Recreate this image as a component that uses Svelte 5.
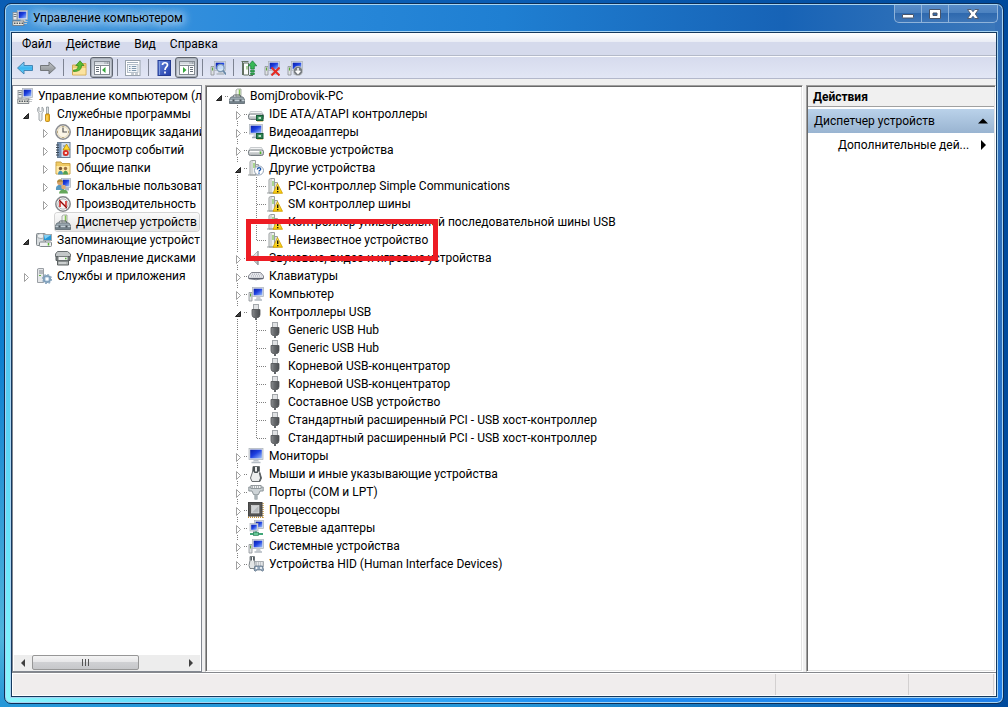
<script>
  const consoleTree = [
    { level: 0, icon: 'console', text: 'Управление компьютером (л' },
    { level: 1, icon: 'tools', text: 'Служебные программы', state: 'open' },
    { level: 2, icon: 'clock', text: 'Планировщик заданий', state: 'closed' },
    { level: 2, icon: 'log', text: 'Просмотр событий', state: 'closed' },
    { level: 2, icon: 'shared', text: 'Общие папки', state: 'closed' },
    { level: 2, icon: 'users', text: 'Локальные пользовате', state: 'closed' },
    { level: 2, icon: 'perf', text: 'Производительность', state: 'closed' },
    { level: 2, icon: 'devmgr', text: 'Диспетчер устройств', selected: true },
    { level: 1, icon: 'storage', text: 'Запоминающие устройст', state: 'open' },
    { level: 2, icon: 'diskmgr', text: 'Управление дисками' },
    { level: 1, icon: 'services', text: 'Службы и приложения', state: 'closed' }
  ];

  const deviceTree = [
    { level: 0, icon: 'devmgr', text: 'BomjDrobovik-PC', state: 'open' },
    { level: 1, icon: 'ide', text: 'IDE ATA/ATAPI контроллеры', state: 'closed' },
    { level: 1, icon: 'video', text: 'Видеоадаптеры', state: 'closed' },
    { level: 1, icon: 'disk', text: 'Дисковые устройства', state: 'closed' },
    { level: 1, icon: 'other', text: 'Другие устройства', state: 'open' },
    { level: 2, icon: 'warn', text: 'PCI-контроллер Simple Communications' },
    { level: 2, icon: 'warn', text: 'SM контроллер шины' },
    { level: 2, icon: 'warn', text: 'Контроллер универсальной последовательной шины USB' },
    { level: 2, icon: 'warn', text: 'Неизвестное устройство', last: true, marked: true },
    { level: 1, icon: 'sound', text: 'Звуковые, видео и игровые устройства', state: 'closed' },
    { level: 1, icon: 'keyboard', text: 'Клавиатуры', state: 'closed' },
    { level: 1, icon: 'computer', text: 'Компьютер', state: 'closed' },
    { level: 1, icon: 'usb', text: 'Контроллеры USB', state: 'open' },
    { level: 2, icon: 'usb', text: 'Generic USB Hub' },
    { level: 2, icon: 'usb', text: 'Generic USB Hub' },
    { level: 2, icon: 'usb', text: 'Корневой USB-концентратор' },
    { level: 2, icon: 'usb', text: 'Корневой USB-концентратор' },
    { level: 2, icon: 'usb', text: 'Составное USB устройство' },
    { level: 2, icon: 'usb', text: 'Стандартный расширенный PCI - USB хост-контроллер' },
    { level: 2, icon: 'usb', text: 'Стандартный расширенный PCI - USB хост-контроллер', last: true },
    { level: 1, icon: 'monitor', text: 'Мониторы', state: 'closed' },
    { level: 1, icon: 'mouse', text: 'Мыши и иные указывающие устройства', state: 'closed' },
    { level: 1, icon: 'port', text: 'Порты (COM и LPT)', state: 'closed' },
    { level: 1, icon: 'cpu', text: 'Процессоры', state: 'closed' },
    { level: 1, icon: 'network', text: 'Сетевые адаптеры', state: 'closed' },
    { level: 1, icon: 'computer', text: 'Системные устройства', state: 'closed' },
    { level: 1, icon: 'hid', text: 'Устройства HID (Human Interface Devices)', state: 'closed', last: true }
  ];

  const tools = [
    { icon: 'back', label: 'Назад' },
    { icon: 'forward', label: 'Вперед' },
    null,
    { icon: 'up', label: 'Вверх' },
    { icon: 'paneLeft', label: 'Дерево консоли', pressed: true },
    null,
    { icon: 'props', label: 'Свойства' },
    null,
    { icon: 'help', label: 'Справка' },
    { icon: 'paneRight', label: 'Панель действий', pressed: true },
    null,
    { icon: 'scan', label: 'Обновить конфигурацию оборудования' },
    null,
    { icon: 'update', label: 'Обновить драйверы' },
    { icon: 'remove', label: 'Удалить' },
    { icon: 'disable', label: 'Отключить' }
  ];

  const screen = (x, y, w, h) =>
    `<rect x="${x}" y="${y}" width="${w}" height="${h}" fill="#dfe3e8" stroke="#a9b0b8" stroke-width=".7"/><rect x="${x + 1.2}" y="${y + 1.2}" width="${w - 2.4}" height="${h - 2.4}" fill="url(#g-screen)"/>`;
  const chassis = '<path d="M2 15V1.500l1.500-1h4V15z" fill="#eef0ef" stroke="#9a9fa0"/><path d="M4 1v14" stroke="#b9bdbe"/><path d="M6 3v5" stroke="#7cc44e" stroke-width="1.200"/><path d="M8 4.500h2.500V15H0" fill="none" stroke="#9a9fa0"/><path d="M8 5h2v9.500H8z" fill="#dcdfdf"/>';
  const chip = '<rect x="8.500" y="9.500" width="6.500" height="5" fill="#2f8652" stroke="#175a35"/><path d="M10 15v1m2-1v1m2-1v1" stroke="#c9a83a"/><rect x="10.500" y="11" width="2.500" height="2" fill="#bfe2c8"/>';
  const drive = '<path d="M2.500 5.500h11l2 3.500H.5z" fill="#f2f3f4" stroke="#b3b8bb" stroke-width=".7"/><rect x=".5" y="8" width="15" height="5.500" rx="2" fill="url(#g-metal)" stroke="#777e83"/><path d="M2 9.500h9" stroke="#fff"/><path d="M12.500 9.500v2.500" stroke="#4fb52a" stroke-width="1.500"/>';
  const tower = '<path d="M1 6.500h3V15H1z" fill="#dfe2e4" stroke="#8a9094" stroke-width=".8"/><path d="M2.500 7.500v3" stroke="#58a838"/>';
  const pc = tower + screen(4.5, 1.5, 11, 9) + '<path d="M8.500 10.500h3.500l1 3H8z" fill="#c7ccd2"/><path d="M6.500 14h7.500" stroke="#b1b8c0" stroke-width="1.500"/>';
  const wcase = '<path d="M2 9h12l1.500 2.500v4H.5v-4z" fill="url(#g-case)" stroke="#59646c" stroke-width=".8"/><path d="M.5 12.500h15" stroke="#d3dde3" stroke-width=".8"/><rect x="3.500" y="11.500" width="2" height="2" fill="#4b555c"/><rect x="10.500" y="11.500" width="2" height="2" fill="#4b555c"/>';
  const paneFrame = '<rect x=".5" y="1.500" width="15" height="13" fill="#fff" stroke="#838a92"/><rect x="1" y="2" width="14" height="2.500" fill="#d5dae0"/><path d="M10.500 3h1m1 0h2" stroke="#69717b"/><path d="M1 5.500h14" stroke="#838a92"/>';

  const icons = {
    console: screen(5.5, 0.5, 10, 9) + '<rect x="1" y="2.500" width="4" height="7.500" fill="#e6e8e8" stroke="#858c93" stroke-width=".8"/><path d="M1.500 4.500h3M1.500 6.500h3" stroke="#777f88"/><path d="M9 9.500h4l1 2H8z" fill="#d3d7db"/><path d="M11 11.500h4.500M12 13.500h3" stroke="#c3c6c8"/><rect x=".8" y="11" width="11" height="4.500" fill="#e5e5df" stroke="#6e747a" stroke-width=".8"/><path d="M2 13.300h9" stroke="#555c62" stroke-width="1.500" stroke-dasharray="1.500 1"/>',
    tools: '<path d="M3 1v3.500L4.500 6 6 4.500V1C8 2.200 8 5.500 6 7v7q-1.500 2-3 0V7C1 5.500 1 2.200 3 1z" fill="#eef0f1" stroke="#8b9297" stroke-width=".8"/><path d="M10.500 1h2v7h-2z" fill="#dde1e3" stroke="#81898f" stroke-width=".7"/><rect x="9.500" y="8" width="4" height="7.500" rx="1" fill="#f2b41c" stroke="#b37c07" stroke-width=".8"/><path d="M11 9.500v5" stroke="#ffe488"/>',
    clock: '<circle cx="8" cy="8" r="7.200" fill="#fbf5e6" stroke="#8b8d91" stroke-width="1.500"/><circle cx="8" cy="8" r="5.500" fill="none" stroke="#e1d6ba"/><path d="M8 3.500V8h4" fill="none" stroke="#555" stroke-width="1.200"/><path d="M8 2v1m0 10v1M2 8h1m10 0h1" stroke="#987e48"/>',
    log: '<rect x="2.500" y=".5" width="12.500" height="15" fill="#cfdeee" stroke="#6b7f95"/><rect x="3" y="1" width="3.500" height="14" fill="#7692b2"/><path d="M1 3h3M1 5.500h3M1 8h3m-3 2.500h3M1 13h3" stroke="#3c4856"/><path d="M8 4h2m-2 3h2m-2 6h2" stroke="#67829c"/><path d="M11.500 2l3.500 6H8z" fill="#ffd72f" stroke="#ab8100" stroke-width=".7"/><circle cx="10.800" cy="11" r="3" fill="#d82d25"/><path d="M9.800 10l2 2m0-2l-2 2" stroke="#fff"/>',
    shared: '<path d="M1 3.500V2h5l1 1.500h8V14H1z" fill="#efca63" stroke="#c9a145"/><path d="M1.500 6h13v7.500h-13z" fill="#ffe9a8"/><circle cx="5.500" cy="8.500" r="1.700" fill="#795632"/><path d="M3 14.500c0-5 5-5 5 0z" fill="#4793ba"/><circle cx="10.500" cy="8.500" r="1.700" fill="#9c7343"/><path d="M8 14.500c0-5 5-5 5 0z" fill="#519f52"/>',
    users: screen(6.5, 0.5, 9, 9) + '<path d="M10 9.500h4v3h-4z" fill="#aebac8"/><circle cx="5" cy="4.500" r="2.800" fill="#d9a268"/><path d="M2 4.500C2 0 8 0 8 4.500L6 3.500z" fill="#b08a3c"/><path d="M1 12c-1-7 8-6 8 0z" fill="#5799c1"/><circle cx="8.500" cy="9" r="2.300" fill="#e0ad76"/><path d="M4 15.500c0-5.500 9-5.500 9 0z" fill="#65a85b"/>',
    perf: '<circle cx="8" cy="8" r="7.200" fill="#fff" stroke="#84888b" stroke-width="1.500"/><circle cx="8" cy="8" r="5.200" fill="#f3f4f4" stroke="#b4b7b9"/><path d="M5 11V5l6 6V5" fill="none" stroke="#d22b28" stroke-width="1.600"/><path d="M4 4l8 8" stroke="#5b1010" stroke-width=".8"/>',
    devmgr: '<path d="M7 9V2l1.500-1H12v8z" fill="#f0f2ee" stroke="#929b93" stroke-width=".8"/><path d="M10.500 1.500v6" stroke="#85c451" stroke-width="1.500"/><path d="M4 9c0-2 1-2 2-2h5l1 2" fill="none" stroke="#525b61"/>' + wcase,
    storage: '<rect x=".5" y="1.500" width="9" height="12" rx="1" fill="#d8dcde" stroke="#7f868b"/><ellipse cx="5" cy="4" rx="4" ry="2.500" fill="#eef0f0" stroke="#8b9398" stroke-width=".7"/><rect x="7.500" y="2.500" width="8" height="6" fill="#2697d5" stroke="#a1a8ac"/><path d="M8 3h7l-6 4z" fill="#85cff2"/><rect x="3.500" y="10" width="12" height="4.500" rx="1" fill="#f0f1f2" stroke="#7e868a"/><path d="M12.500 11v2.500" stroke="#54b52f" stroke-width="1.500"/>',
    diskmgr: '<path d="M2.500 1.500h10l3 2.500v2.500H.5V4z" fill="#c3c7c8" stroke="#696f71"/><path d="M1 6.500h14v4H1z" fill="#737879" stroke="#5d6364"/><rect x="3" y="6.500" width="10" height="4" rx="1" fill="#f0f1f1" stroke="#777d7e"/><path d="M2.500 11h11v4h-11z" fill="#b4b8b8" stroke="#5d6263"/><path d="M4 13h7" stroke="#e5e8e8"/><path d="M10 8.500h1.500" stroke="#59af3c" stroke-width="1.500"/>',
    services: '<path d="M1.500 1L3 .5h4.500v14h-6z" fill="#e5e7e9" stroke="#9a9fa4"/><path d="M3 3h4M3 5h4" stroke="#818990"/><path d="M3 7.500h2" stroke="#5fb33f"/><circle cx="11" cy="11" r="3.200" fill="#cbdded" stroke="#7f9fba" stroke-width="1.800"/><circle cx="11" cy="11" r="4.500" fill="none" stroke="#8ba8c0" stroke-width="1.200" stroke-dasharray="1.800 1.700"/><circle cx="11" cy="11" r="1.200" fill="#fff"/>',
    ide: drive + chip,
    video: screen(1.5, 0.5, 13, 9.5) + '<path d="M6 10h4v3H5z" fill="#cbd1d9"/><path d="M4 13.500h5" stroke="#9ea8b3" stroke-width="1.500"/>' + chip,
    disk: drive,
    other: chassis + '<circle cx="11" cy="10.500" r="4.500" fill="#fff" stroke="#94a4b8"/><path d="M9.300 9.500c0-2.300 3.400-2.300 3.400-.3 0 1.200-1.700 1-1.700 2.400m0 1v1.200" fill="none" stroke="#1753a8" stroke-width="1.300"/>',
    warn: chassis + '<path d="M10.500 5.500l5 9.800H6z" fill="url(#g-warn)" stroke="#d1a000" stroke-width=".8" stroke-linejoin="round"/><path d="M10.700 8.500v3.500m0 1v1.300" stroke="#17130a" stroke-width="1.400"/>',
    sound: '<path d="M1 6h4l5-5v14l-5-5H1z" fill="url(#g-metal)" stroke="#a2a7aa" stroke-width=".8"/><path d="M10 1v14" stroke="#8b9194"/>',
    keyboard: '<path d="M3.500 4.500h9L15.500 8v2.500q-7.500 2.500-15 0V8z" fill="#e8e9ed" stroke="#84868f"/><path d="M4 6.200h8.500M3 8h10.500" stroke="#9195a3" stroke-width=".8" stroke-dasharray="1 1"/><path d="M1 10.500h14" stroke="#5f6370" stroke-width="1.300"/>',
    computer: pc,
    usb: '<rect x="5.500" y=".5" width="5" height="5" fill="#e1e3e5" stroke="#a2a6aa"/><path d="M4 5.500h8v5q0 2.500-2 3H6q-2-.5-2-3z" fill="url(#g-usb)" stroke="#505356" stroke-width=".8"/><path d="M8 13.500V16" stroke="#62666a" stroke-width="2"/>',
    monitor: screen(1, 0.5, 14, 11) + '<path d="M6 11.500h4l1 2H5z" fill="#bec5cd"/><path d="M3.500 14.500h9" stroke="#b5bdc5" stroke-width="1.500"/>',
    mouse: '<path d="M5 .5h6.500v5l2 6.500-1.500 3.500H4L2.500 12l2-6z" fill="#eceeee" stroke="#696e70"/><path d="M5 1h6v4L9.500 7h-3L5 5z" fill="#484f52"/><path d="M8 1v4.500" stroke="#fff" stroke-width="1.800"/><path d="M11.500 7l1.300 5-1.300 3" fill="none" stroke="#555b5e" stroke-width="1.300"/>',
    port: '<path d="M.8 3h14.400v4H12l-1.500 3.500h-5L4 7H.8z" fill="#cdd3d6" stroke="#828b90" stroke-width=".9"/><rect x="3" y="1.500" width="10" height="3" fill="#f3f4f4" stroke="#7d868b" stroke-width=".8"/><path d="M4 3h8" stroke="#697378" stroke-dasharray="1 1"/><path d="M6.500 10.500h3V16h-3z" fill="#b8c0c3"/><path d="M6 12h4m-4 2h4" stroke="#929ca1" stroke-width=".8"/>',
    cpu: '<path d="M15 1v15M0 15.300h16" stroke="#c99432" stroke-width="1.400" stroke-dasharray="1 1"/><rect x=".5" y=".5" width="13.500" height="13.500" fill="#555554" stroke="#444"/><rect x="3.500" y="3.500" width="7.500" height="7.500" fill="#d2d4d5" stroke="#e9e9e9" stroke-width=".6"/><path d="M4 10.500L10.500 4v6.500z" fill="#b6b9bb"/>',
    network: screen(6.5, 0.5, 9, 8) + screen(2, 3.5, 8, 7.5) + '<path d="M5 10.500h4v1.500H5z" fill="#adb8c4"/><path d="M2 14h13M8 11.500V14" stroke="#41a779" stroke-width="2"/><rect x="5.500" y="12.300" width="5" height="3.200" fill="#64c997" stroke="#34805d" stroke-width=".7"/>',
    hid: '<path d="M2 .5h4.500v4l1 5-1 3H2l-1-3 1-5z" fill="#e2e5e6" stroke="#60676c" stroke-width=".8"/><path d="M2.500 1h4v3.500h-4z" fill="#596166"/><path d="M4.500 1v4" stroke="#fff"/><path d="M7 5.500h8.500v5H7z" fill="#e4e7e9" stroke="#959ca1" stroke-width=".8"/><path d="M8 7h6.500M8 9h6.500" stroke="#8a9299" stroke-width=".8" stroke-dasharray="1 1"/><path d="M7 10h7.500l1.200 4q-1 2.500-2.700 0H9q-2 2.500-3 0z" fill="#93a7bc" stroke="#576b80" stroke-width=".7"/><circle cx="8.500" cy="12" r="1" fill="#fff"/><circle cx="13" cy="12" r="1" fill="#fff"/>',
    back: '<path d="M.5 8L7 2v3.500h8.500v5H7V14z" fill="url(#g-back)" stroke="#4586b5" stroke-linejoin="round"/>',
    forward: '<path d="M15.500 8L9 2v3.500H.5v5H9V14z" fill="url(#g-fwd)" stroke="#73777b" stroke-linejoin="round"/>',
    up: '<path d="M1.500 5h5L8 3.500h7V15H1.500z" fill="#f0cd72" stroke="#cfa956"/><path d="M2 8h12.500v6.500H2z" fill="#fbe3a0"/><path d="M2.500 10c3.500 0 4.500-1.500 4.500-4.500H4.800L9 .8l4 4.700h-2.500c0 4.500-3 6-8 6z" fill="#59bb31" stroke="#2d851e" stroke-width=".7"/>',
    paneLeft: paneFrame + '<path d="M6.500 6v8" stroke="#838a92"/><path d="M2 7.500h3M2 9.500h3m-3 2h3" stroke="#68717b"/><path d="M11.500 7v6L8 10z" fill="#35a63a"/>',
    paneRight: paneFrame + '<path d="M9.500 6v8" stroke="#838a92"/><path d="M11 7.500h3M11 9.500h3m-3 2h3" stroke="#68717b"/><path d="M4 7v6l3.500-3z" fill="#35a63a"/>',
    props: '<rect x=".5" y=".5" width="14.500" height="15" fill="#fff" stroke="#98a2ac"/><path d="M2 2.500h11" stroke="#a2b0bd"/><rect x="2.500" y="4.500" width="10.500" height="8" fill="#f3f7fa" stroke="#a7b2bd" stroke-width=".8"/><path d="M4 6.500h1.500m1.300 0h4.500M4 8.500h1.500m1.300 0h4.500M4 10.500h1.500m1.300 0h4.500" stroke="#7f98ad"/><path d="M6 14h3m1 0h3" stroke="#8b97a4"/>',
    help: '<rect x="2" y=".5" width="12.500" height="15" fill="url(#g-help)" stroke="#233a91"/><path d="M3.500 1v14" stroke="#7e9be0"/><path d="M6.500 5c0-3 5-3 5 0 0 2-2.500 2-2.500 5m0 1.500v2" fill="none" stroke="#fff" stroke-width="1.700"/>',
    scan: pc + '<circle cx="10.500" cy="8" r="3.600" fill="#d7ebfb" fill-opacity=".85" stroke="#7d98b3" stroke-width="1.200"/><path d="M13 10.500l3 4" stroke="#6888a6" stroke-width="1.800"/>',
    update: '<path d="M2.500 15V3h5v12z" fill="#fbfcfb" stroke="#617161"/><path d="M6 6v3.500" stroke="#77b860" stroke-width="1.200"/><path d="M.5 1.500h7M1.500 1.500V15M8 15.500h4" fill="none" stroke="#617161"/><path d="M11.500.8l4.300 5h-2.500V9h-3.600V5.800H7.300zM9.700 10.200h3.600V12H9.700zm0 2.800h3.600v1.500H9.700z" fill="#38b957" stroke="#157735" stroke-width=".7"/>',
    remove: pc + '<path d="M7.500 7.500l8 8M15.500 7.500l-8 8" stroke="#e52a22" stroke-width="2"/>',
    disable: pc + '<circle cx="11" cy="11" r="4.700" fill="#777c82" stroke="#c7cacd" stroke-width=".8"/><path d="M11 8v5M8.700 10.800l2.300 2.500 2.300-2.500" fill="none" stroke="#fff" stroke-width="1.500"/>'
  };
</script>

{#snippet icon(name)}
  <svg class="icon" viewBox="0 0 16 16" aria-hidden="true">{@html icons[name]}</svg>
{/snippet}

{#snippet expander(state)}
  <button class="expander" aria-label={state === 'open' ? 'Свернуть' : 'Развернуть'}>
    <svg viewBox="0 0 9 10">
      {#if state === 'open'}
        <path d="M6.500 3.500v5h-5z" fill="#404040" stroke="#202020" />
      {:else}
        <path d="M2.500 1.500v8l4-4z" fill="#fff" stroke="#a0a0a0" />
      {/if}
    </svg>
  </button>
{/snippet}

{#snippet row(item, lines)}
  <li class="row">
    {#each Array(lines ? item.level : Math.max(item.level - 1, 0)) as _, depth}
      <span class="cell">
        {#if lines && depth > 0}
          <svg class="guide" viewBox="0 0 19 18"><path d="M8.500 0v18" /></svg>
        {/if}
      </span>
    {/each}
    {#if lines || item.level > 0}
      <span class="cell">
        {#if lines}
          <svg class="guide" viewBox="0 0 19 18">
            {#if item.level > 0}<path d={item.last ? 'M8.500 0v10' : 'M8.500 0v18'} />{/if}
            <path d={item.state ? 'M15 9.500h4' : 'M9 9.500h10'} />
          </svg>
        {/if}
        {#if item.state}{@render expander(item.state)}{/if}
      </span>
    {/if}
    <a class="label" class:selected={item.selected} href="#top">
      {@render icon(item.icon)}
      <span>{item.text}</span>
    </a>
    {#if item.marked}<span class="marker"></span>{/if}
  </li>
{/snippet}

<svg class="defs" aria-hidden="true">
  <defs>
    <linearGradient id="g-screen" x2="1" y2="1"><stop offset="0" stop-color="#0a1fa5" /><stop offset=".45" stop-color="#1c3fe0" /><stop offset="1" stop-color="#9cc0fa" /></linearGradient>
    <linearGradient id="g-metal" x2="0" y2="1"><stop stop-color="#f4f5f5" /><stop offset="1" stop-color="#a9aeb1" /></linearGradient>
    <linearGradient id="g-case" x2="0" y2="1"><stop stop-color="#a8b5bd" /><stop offset="1" stop-color="#6b7982" /></linearGradient>
    <linearGradient id="g-warn" x2="0" y2="1"><stop stop-color="#fff27a" /><stop offset="1" stop-color="#f7c600" /></linearGradient>
    <linearGradient id="g-usb"><stop stop-color="#8b8e91" /><stop offset=".4" stop-color="#686b6e" /><stop offset="1" stop-color="#4a4d50" /></linearGradient>
    <linearGradient id="g-back" x2="0" y2="1"><stop stop-color="#a9dcf8" /><stop offset=".5" stop-color="#39b5f0" /><stop offset="1" stop-color="#68d3fb" /></linearGradient>
    <linearGradient id="g-fwd" x2="0" y2="1"><stop stop-color="#c0c3c6" /><stop offset="1" stop-color="#85898d" /></linearGradient>
    <linearGradient id="g-help" x2="1" y2="1"><stop stop-color="#6587dd" /><stop offset="1" stop-color="#203ba8" /></linearGradient>
  </defs>
</svg>

<div class="desktop" id="top">
  <div class="window">
    <header class="titlebar">
      {@render icon('console')}
      <h1>Управление компьютером</h1>
      <div class="controls">
        <button aria-label="Свернуть"><svg viewBox="0 0 14 12"><rect x="1.500" y="6.500" width="11" height="3.500" rx=".5" fill="#fff" stroke="#4a5568" /></svg></button>
        <button aria-label="Развернуть"><svg viewBox="0 0 14 12"><path fill-rule="evenodd" d="M1.500 1.500h11v9h-11zM5 5v2.500h4V5z" fill="#fff" stroke="#4a5568" /></svg></button>
        <button class="close" aria-label="Закрыть"><svg viewBox="0 0 14 12"><path d="M1.500 1.500h3.700L7 3.700l1.800-2.200h3.700L9.300 6l3.200 4.500H8.800L7 8.300l-1.800 2.200H1.500L4.700 6z" fill="#fff" stroke="#4a5568" stroke-width=".9" /></svg></button>
      </div>
    </header>

    <div class="client">
      <nav class="menubar">
        <button>Файл</button>
        <button>Действие</button>
        <button>Вид</button>
        <button>Справка</button>
      </nav>

      <div class="toolbar" role="toolbar" aria-label="Панель инструментов">
        {#each tools as tool}
          {#if tool}
            <button class="tool" class:pressed={tool.pressed} aria-label={tool.label}>{@render icon(tool.icon)}</button>
          {:else}
            <span class="separator"></span>
          {/if}
        {/each}
      </div>

      <main class="panes">
        <section class="pane console">
          <ul class="tree">
            {#each consoleTree as item}{@render row(item, false)}{/each}
          </ul>
          <div class="scrollbar">
            <button aria-label="Влево"><svg viewBox="0 0 4 8"><path d="M4 0v8L0 4z" /></svg></button>
            <div class="track"><div class="thumb"><i></i><i></i><i></i></div></div>
            <button aria-label="Вправо"><svg viewBox="0 0 4 8"><path d="M0 0v8l4-4z" /></svg></button>
          </div>
        </section>

        <section class="pane devices">
          <ul class="tree">
            {#each deviceTree as item}{@render row(item, true)}{/each}
          </ul>
        </section>

        <aside class="pane actions">
          <h2>Действия</h2>
          <button class="group"><span>Диспетчер устройств</span><svg viewBox="0 0 10 10"><path d="M0 7.500L5 2.500l5 5z" /></svg></button>
          <button class="action"><span>Дополнительные дей...</span><svg viewBox="0 0 10 10"><path d="M3 0v10l5-5z" /></svg></button>
        </aside>
      </main>

      <footer class="status"><span></span><span></span><span></span></footer>
    </div>
  </div>
</div>

<style>
  :global(body) {
    margin: 0;
  }
  * {
    box-sizing: border-box;
  }
  button {
    margin: 0;
    padding: 0;
    border: 0;
    background: none;
    color: inherit;
    font: inherit;
  }
  .defs {
    position: absolute;
    width: 0;
    height: 0;
  }
  .desktop {
    display: flex;
    min-height: 100vh;
    padding: 3px 4px;
    background:
      linear-gradient(90deg, transparent 50%, #004a9c),
      linear-gradient(180deg, #0a5db4, #0d7fd0 50%, #4fb4dc 90%, #2496d8);
    color: #000;
    font: 12px/18px Roboto, "Open Sans", sans-serif;
  }
  .window {
    display: flex;
    flex: 1;
    flex-direction: column;
    min-width: 0;
    padding: 1px 5px 5px;
    border: 1px solid #0d2f57;
    border-radius: 7px;
    background:
      linear-gradient(180deg, transparent 30px, #35a5e6 120px, #69e6fb 80%, #8cf7fd) left / 8px 100% no-repeat,
      linear-gradient(90deg, #8cf7fd, #4fd0fb 22%, #1e90f4 55%, #2080ea) bottom / 100% 8px no-repeat,
      linear-gradient(180deg, #3772b8, #2a70c0 50%, #2080ea) right / 8px 100% no-repeat,
      linear-gradient(90deg, #4496dc, #2b8bdc 25%, #1f7fd2 50%, #1763b6 78%, #3d78ba);
    box-shadow: inset 0 0 0 1px #a8d4f2;
  }
  .titlebar {
    display: flex;
    align-items: center;
    height: 26px;
    padding-left: 2px;
    gap: 5px;
  }
  h1 {
    flex: 1;
    margin: 0;
    font-size: 12px;
    font-weight: 400;
    text-shadow: 0 0 8px #b7dbf5, 0 0 8px #b7dbf5, 0 0 12px #b7dbf5, 0 0 12px #b7dbf5;
  }
  .controls {
    display: flex;
    align-self: flex-start;
    height: 18px;
    border: 1px solid #8fb3da;
    border-top: 0;
    border-radius: 0 0 5px 5px;
    background: linear-gradient(#5a8dc8, #4c82c0 45%, #2f69ae 50%, #3d76b8);
  }
  .controls button {
    display: grid;
    width: 27px;
    place-items: center;
    border-right: 1px solid #8fb3da;
  }
  .controls .close {
    width: 48px;
    border-right: 0;
  }
  .controls svg {
    width: 14px;
    height: 12px;
  }
  .client {
    display: flex;
    flex: 1;
    flex-direction: column;
    border: 1px solid #14395f;
    background: #f0f0f0;
    box-shadow: 0 0 0 1px #a8d4f2;
    margin: 1px;
    min-width: 0;
  }
  .menubar {
    display: flex;
    height: 23px;
    padding: 0 10px;
    gap: 14px;
    border-bottom: 1px solid #b4bac9;
    background: linear-gradient(#fff, #e9ecf5 9px, #d5daec 9px, #d5daec);
  }
  .toolbar {
    display: flex;
    align-items: center;
    height: 23px;
    padding-left: 1px;
    border-top: 1px solid #fafbfe;
    border-bottom: 1px solid #b3b8cb;
    background: linear-gradient(#d6dbed, #e2e6f5);
  }
  .tool {
    display: grid;
    width: 23px;
    height: 21px;
    place-items: center;
  }
  .pressed {
    border: 1px solid #5f6570;
    border-radius: 3px;
    background: linear-gradient(#b9bfc9, #dde1e8);
    box-shadow: inset 0 0 0 1px #a9afba;
  }
  .separator {
    width: 1px;
    height: 17px;
    margin: 0 3px 0 4px;
    background: #7d8392;
  }
  .icon {
    flex: none;
    width: 16px;
    height: 16px;
  }
  .panes {
    display: grid;
    flex: 1;
    grid-template-columns: 190px minmax(0, 1fr) 190px;
    gap: 3px;
    padding-top: 6px;
    border-bottom: 1px solid #85878c;
  }
  .pane {
    min-width: 0;
    padding: 1px;
    overflow: hidden;
    border: 1px solid;
    border-color: #a0a0a0 #fff #fff #a0a0a0;
    background: #fff;
    box-shadow: inset 1px 1px #696969, inset -1px -1px #e3e3e3;
  }
  .console {
    display: flex;
    flex-direction: column;
    justify-content: space-between;
    padding: 0;
    border-color: #828790;
    box-shadow: none;
  }
  .tree {
    margin: 0;
    padding: 0 3px;
    overflow: hidden;
    list-style: none;
  }
  .console .tree {
    padding: 1px 0 0 4px;
  }
  .row {
    position: relative;
    display: flex;
    height: 18px;
    white-space: nowrap;
  }
  .cell {
    display: grid;
    flex: none;
    width: 19px;
    height: 18px;
    place-items: center;
  }
  .cell > * {
    grid-area: 1 / 1;
  }
  .guide {
    width: 19px;
    height: 18px;
    fill: none;
    stroke: #808080;
    stroke-dasharray: 1 1;
  }
  .expander {
    z-index: 1;
    display: grid;
    width: 9px;
    height: 12px;
    align-items: end;
    background: #fff;
  }
  .expander svg {
    width: 9px;
    height: 10px;
  }
  .label {
    display: flex;
    align-items: center;
    gap: 5px;
    padding-right: 2px;
    color: #000;
    text-decoration: none;
  }
  .selected {
    border-radius: 3px;
    background: linear-gradient(#fafafa, #e5e5e5);
    box-shadow: 0 0 0 1px #d4d4d4;
  }
  .marker {
    position: absolute;
    top: -12px;
    left: 36px;
    z-index: 2;
    width: 192px;
    height: 42px;
    border: 5px solid #ed1c24;
  }
  .scrollbar {
    display: flex;
    height: 16px;
    margin: 0 1px;
    background: #ededed;
  }
  .scrollbar button {
    display: grid;
    width: 18px;
    place-items: center;
  }
  .scrollbar svg {
    width: 4px;
    height: 8px;
    fill: #404040;
  }
  .track {
    flex: 1;
  }
  .thumb {
    display: flex;
    align-items: center;
    justify-content: center;
    gap: 2px;
    width: 71%;
    height: 15px;
    border: 1px solid #979797;
    border-radius: 2px;
    background: linear-gradient(#f4f4f4, #e6e6e8 48%, #cfd0d3 50%, #c6c7ca);
  }
  .thumb i {
    width: 1px;
    height: 7px;
    background: #555;
  }
  .actions {
    display: flex;
    flex-direction: column;
  }
  h2 {
    margin: 0;
    padding: 1px 5px 0;
    border-bottom: 1px solid #a0a0a0;
    background: #f0f0f0;
    font-size: 12px;
    line-height: 18px;
  }
  .group,
  .action {
    display: flex;
    align-items: center;
    justify-content: space-between;
    height: 24px;
    padding: 0 6px;
  }
  .group {
    margin-top: 2px;
    background: linear-gradient(#bad2ea, #99b4d1);
  }
  .action {
    padding-left: 30px;
  }
  .actions svg {
    width: 10px;
    height: 10px;
  }
  .status {
    display: flex;
    justify-content: flex-end;
    height: 23px;
    padding-right: 1px;
    border: 1px solid #fff;
    background: #f0eded;
  }
  .status span {
    width: 85px;
    border-right: 1px solid #d3d0d0;
  }
  .status span:nth-child(2) {
    width: 133px;
  }
</style>
